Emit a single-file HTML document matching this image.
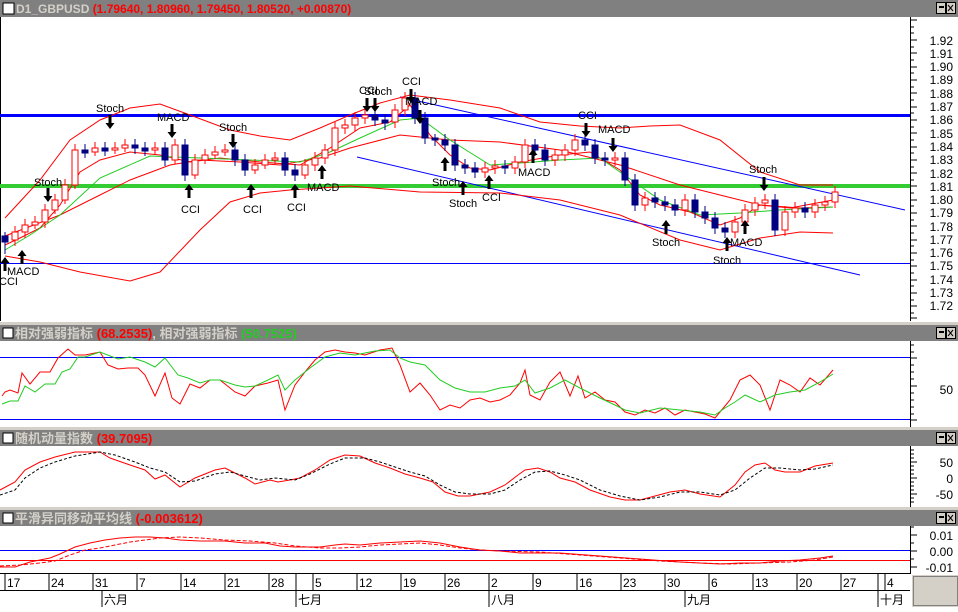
<!DOCTYPE html>
<html><head><meta charset="utf-8"><style>
body{margin:0;background:#fff;width:958px;height:607px;overflow:hidden;font-family:"Liberation Sans","Noto Sans CJK SC",sans-serif}
</style></head><body>
<svg width="958" height="607" xmlns="http://www.w3.org/2000/svg" font-family="Liberation Sans, Noto Sans CJK SC, sans-serif">
<rect width="958" height="607" fill="#fff"/>
<g>
<rect x="0" y="0" width="958" height="17" fill="#808080"/>
<rect x="3" y="3" width="11" height="11" fill="#fff" stroke="#000"/>
<text x="16" y="13" font-size="12" font-weight="bold" fill="#d4d0c8">D1_GBPUSD <tspan fill="#f00">(1.79640, 1.80960, 1.79450, 1.80520, +0.00870)</tspan></text>
<rect x="0" y="322" width="958" height="3" fill="#d4d0c8"/>
<rect x="0" y="325" width="958" height="16" fill="#808080"/>
<rect x="3" y="328" width="10" height="10" fill="#fff" stroke="#000"/>
<text x="15" y="338" font-size="13" font-weight="bold" fill="#d4d0c8">相对强弱指标 <tspan fill="#f00">(68.2535)</tspan>, 相对强弱指标 <tspan fill="#2c2">(50.7525)</tspan></text>
<rect x="0" y="427" width="958" height="3" fill="#d4d0c8"/>
<rect x="0" y="430" width="958" height="16" fill="#808080"/>
<rect x="3" y="433" width="10" height="10" fill="#fff" stroke="#000"/>
<text x="15" y="443" font-size="13" font-weight="bold" fill="#d4d0c8">随机动量指数 <tspan fill="#f00">(39.7095)</tspan></text>
<rect x="0" y="507" width="958" height="3" fill="#d4d0c8"/>
<rect x="0" y="510" width="958" height="16" fill="#808080"/>
<rect x="3" y="513" width="10" height="10" fill="#fff" stroke="#000"/>
<text x="15" y="523" font-size="13" font-weight="bold" fill="#d4d0c8">平滑异同移动平均线 <tspan fill="#f00">(-0.003612)</tspan></text>
<g fill="#d4d0c8" stroke="#000" stroke-width="1">
<rect x="936.5" y="2.5" width="9" height="11"/><rect x="946.5" y="2.5" width="9" height="11"/>
<rect x="936.5" y="327.5" width="9" height="11"/><rect x="946.5" y="327.5" width="9" height="11"/>
<rect x="936.5" y="432.5" width="9" height="11"/><rect x="946.5" y="432.5" width="9" height="11"/>
<rect x="936.5" y="512.5" width="9" height="11"/><rect x="946.5" y="512.5" width="9" height="11"/>
</g>
<g stroke="#000" stroke-width="2"><line x1="939" y1="7" x2="944" y2="7"/><line x1="939" y1="332" x2="944" y2="332"/><line x1="939" y1="437" x2="944" y2="437"/><line x1="939" y1="517" x2="944" y2="517"/></g>
<g stroke="#000" stroke-width="1"><path d="M948 5l5 6M953 5l-5 6M948 330l5 6M953 330l-5 6M948 435l5 6M953 435l-5 6M948 515l5 6M953 515l-5 6"/></g>
</g>
<g stroke="#000"><line x1="910.5" y1="17" x2="910.5" y2="321"/><line x1="910.5" y1="341" x2="910.5" y2="427"/><line x1="910.5" y1="446" x2="910.5" y2="507"/><line x1="910.5" y1="526" x2="910.5" y2="574"/><line x1="0" y1="573.5" x2="910" y2="573.5"/><line x1="0" y1="590.5" x2="910" y2="590.5"/><line x1="0.5" y1="17" x2="0.5" y2="321"/></g>
<g stroke="#000">
<path d="M910 20h7M910 27h4M910 33h4M910 40h7M910 47h4M910 53h7M910 60h4M910 67h7M910 73h4M910 80h7M910 87h4M910 93h7M910 100h4M910 107h7M910 113h4M910 120h7M910 127h4M910 133h7M910 140h4M910 147h7M910 153h4M910 160h7M910 167h4M910 173h7M910 180h4M910 186h7M910 193h4M910 200h7M910 206h4M910 213h7M910 220h4M910 226h7M910 233h4M910 240h7M910 246h4M910 253h7M910 260h4M910 266h7M910 273h4M910 280h7M910 286h4M910 293h7M910 300h4M910 306h7M910 313h4M910 318h7"/>
</g>
<g font-size="12" fill="#000" text-anchor="end">
<text x="953" y="45">1.92</text><text x="953" y="58">1.91</text><text x="953" y="71">1.90</text><text x="953" y="84">1.89</text><text x="953" y="98">1.88</text><text x="953" y="111">1.87</text><text x="953" y="124">1.86</text><text x="953" y="138">1.85</text><text x="953" y="151">1.84</text><text x="953" y="164">1.83</text><text x="953" y="178">1.82</text><text x="953" y="191">1.81</text><text x="953" y="204">1.80</text><text x="953" y="217">1.79</text><text x="953" y="231">1.78</text><text x="953" y="244">1.77</text><text x="953" y="257">1.76</text><text x="953" y="270">1.75</text><text x="953" y="284">1.74</text><text x="953" y="297">1.73</text><text x="953" y="310">1.72</text>
</g>
<rect x="0" y="114" width="910" height="3" fill="#00f"/>
<rect x="0" y="184" width="910" height="4" fill="#33cc33"/>
<line x1="0" y1="263.5" x2="910" y2="263.5" stroke="#00f"/>
<line x1="400" y1="97" x2="905" y2="210" stroke="#00f"/>
<line x1="357" y1="157" x2="860" y2="275" stroke="#00f"/>
<g fill="none" stroke="#f00">
<polyline points="5,218 40,180 70,140 100,120 130,108 160,104 190,115 230,130 260,136 290,140 320,128 350,115 380,103 410,95 450,100 500,108 540,122 580,126 620,128 650,126 680,125 720,140 760,172 800,185 833,185"/>
<polyline points="5,256 40,262 80,272 130,281 160,272 200,230 230,202 260,193 290,190 350,186 420,192 500,193 560,200 620,215 680,240 720,250 760,238 800,232 833,233"/>
<polyline points="5,236 60,215 100,195 130,180 170,165 200,160 240,162 280,165 320,158 350,148 400,135 450,140 500,142 560,150 620,165 680,185 720,195 760,205 800,208 833,207"/>
<polyline points="5,245 20,238 40,228 60,205 80,172 100,160 130,152 160,155 190,162 220,158 260,162 300,165 330,148 360,128 390,122 410,105 430,135 450,155 470,168 490,170 520,162 560,155 590,152 620,170 640,195 660,205 690,212 720,225 740,218 760,205 790,208 833,200"/>
</g>
<polyline fill="none" stroke="#2c2" points="5,250 30,235 60,215 100,178 150,156 200,158 250,160 300,162 330,152 360,138 400,120 420,118 450,140 490,165 520,163 560,160 600,158 620,172 660,200 700,215 740,213 780,210 833,207"/>
<g>
<g stroke="#f00" fill="#fff">
<line x1="15" y1="226" x2="15" y2="246"/><rect x="12" y="232" width="6" height="8"/>
<line x1="25" y1="219" x2="25" y2="238"/><rect x="22" y="225" width="6" height="7"/>
<line x1="35" y1="216" x2="35" y2="229"/><rect x="32" y="222" width="6" height="3"/>
<line x1="45" y1="204" x2="45" y2="228"/><rect x="42" y="210" width="6" height="12"/>
<line x1="55" y1="194" x2="55" y2="214"/><rect x="52" y="200" width="6" height="10"/>
<line x1="65" y1="179" x2="65" y2="204"/><rect x="62" y="185" width="6" height="15"/>
<line x1="75" y1="144" x2="75" y2="189"/><rect x="72" y="150" width="6" height="35"/>
<line x1="95" y1="142" x2="95" y2="156"/><rect x="92" y="148" width="6" height="4"/>
<line x1="115" y1="142" x2="115" y2="154"/><rect x="112" y="148" width="6" height="2"/>
<line x1="125" y1="139" x2="125" y2="152"/><rect x="122" y="145" width="6" height="3"/>
<line x1="155" y1="142" x2="155" y2="154"/><rect x="152" y="148" width="6" height="2"/>
<line x1="175" y1="139" x2="175" y2="164"/><rect x="172" y="145" width="6" height="15"/>
<line x1="195" y1="154" x2="195" y2="179"/><rect x="192" y="160" width="6" height="15"/>
<line x1="205" y1="149" x2="205" y2="164"/><rect x="202" y="155" width="6" height="5"/>
<line x1="215" y1="146" x2="215" y2="159"/><rect x="212" y="152" width="6" height="3"/>
<line x1="225" y1="144" x2="225" y2="156"/><rect x="222" y="150" width="6" height="2"/>
<line x1="255" y1="159" x2="255" y2="174"/><rect x="252" y="165" width="6" height="5"/>
<line x1="265" y1="154" x2="265" y2="169"/><rect x="262" y="160" width="6" height="5"/>
<line x1="275" y1="152" x2="275" y2="164"/><rect x="272" y="158" width="6" height="2"/>
<line x1="305" y1="159" x2="305" y2="179"/><rect x="302" y="165" width="6" height="10"/>
<line x1="315" y1="152" x2="315" y2="171"/><rect x="312" y="158" width="6" height="7"/>
<line x1="325" y1="144" x2="325" y2="164"/><rect x="322" y="150" width="6" height="8"/>
<line x1="335" y1="122" x2="335" y2="156"/><rect x="332" y="128" width="6" height="22"/>
<line x1="345" y1="119" x2="345" y2="134"/><rect x="342" y="125" width="6" height="3"/>
<line x1="355" y1="112" x2="355" y2="131"/><rect x="352" y="118" width="6" height="7"/>
<line x1="365" y1="109" x2="365" y2="124"/><rect x="362" y="115" width="6" height="3"/>
<line x1="395" y1="104" x2="395" y2="128"/><rect x="392" y="110" width="6" height="12"/>
<line x1="405" y1="92" x2="405" y2="116"/><rect x="402" y="98" width="6" height="12"/>
<line x1="485" y1="162" x2="485" y2="178"/><rect x="482" y="168" width="6" height="4"/>
<line x1="495" y1="160" x2="495" y2="174"/><rect x="492" y="166" width="6" height="2"/>
<line x1="515" y1="156" x2="515" y2="174"/><rect x="512" y="162" width="6" height="6"/>
<line x1="525" y1="139" x2="525" y2="168"/><rect x="522" y="145" width="6" height="17"/>
<line x1="555" y1="149" x2="555" y2="166"/><rect x="552" y="155" width="6" height="5"/>
<line x1="565" y1="144" x2="565" y2="161"/><rect x="562" y="150" width="6" height="5"/>
<line x1="575" y1="134" x2="575" y2="156"/><rect x="572" y="140" width="6" height="10"/>
<line x1="615" y1="152" x2="615" y2="166"/><rect x="612" y="158" width="6" height="2"/>
<line x1="645" y1="192" x2="645" y2="211"/><rect x="642" y="198" width="6" height="7"/>
<line x1="685" y1="194" x2="685" y2="216"/><rect x="682" y="200" width="6" height="10"/>
<line x1="735" y1="216" x2="735" y2="238"/><rect x="732" y="222" width="6" height="10"/>
<line x1="745" y1="204" x2="745" y2="228"/><rect x="742" y="210" width="6" height="12"/>
<line x1="755" y1="197" x2="755" y2="216"/><rect x="752" y="203" width="6" height="7"/>
<line x1="765" y1="194" x2="765" y2="209"/><rect x="762" y="200" width="6" height="3"/>
<line x1="785" y1="206" x2="785" y2="236"/><rect x="782" y="212" width="6" height="18"/>
<line x1="795" y1="202" x2="795" y2="218"/><rect x="792" y="208" width="6" height="4"/>
<line x1="815" y1="199" x2="815" y2="218"/><rect x="812" y="205" width="6" height="7"/>
<line x1="825" y1="196" x2="825" y2="211"/><rect x="822" y="202" width="6" height="3"/>
<line x1="835" y1="186" x2="835" y2="208"/><rect x="832" y="192" width="6" height="10"/>
</g>
<g stroke="#000080" fill="#000080">
<line x1="5" y1="232" x2="5" y2="254"/><rect x="2" y="236" width="6" height="6"/>
<line x1="85" y1="144" x2="85" y2="158"/><rect x="82" y="150" width="6" height="3"/>
<line x1="105" y1="142" x2="105" y2="156"/><rect x="102" y="148" width="6" height="3"/>
<line x1="135" y1="139" x2="135" y2="154"/><rect x="132" y="145" width="6" height="3"/>
<line x1="145" y1="142" x2="145" y2="156"/><rect x="142" y="148" width="6" height="3"/>
<line x1="165" y1="142" x2="165" y2="166"/><rect x="162" y="148" width="6" height="12"/>
<line x1="185" y1="139" x2="185" y2="181"/><rect x="182" y="145" width="6" height="30"/>
<line x1="235" y1="144" x2="235" y2="166"/><rect x="232" y="150" width="6" height="10"/>
<line x1="245" y1="154" x2="245" y2="176"/><rect x="242" y="160" width="6" height="10"/>
<line x1="285" y1="152" x2="285" y2="176"/><rect x="282" y="158" width="6" height="12"/>
<line x1="295" y1="164" x2="295" y2="181"/><rect x="292" y="170" width="6" height="5"/>
<line x1="375" y1="109" x2="375" y2="126"/><rect x="372" y="115" width="6" height="5"/>
<line x1="385" y1="114" x2="385" y2="130"/><rect x="382" y="120" width="6" height="3"/>
<line x1="415" y1="92" x2="415" y2="124"/><rect x="412" y="98" width="6" height="20"/>
<line x1="425" y1="112" x2="425" y2="144"/><rect x="422" y="118" width="6" height="20"/>
<line x1="435" y1="134" x2="435" y2="146"/><rect x="432" y="138" width="6" height="2"/>
<line x1="445" y1="134" x2="445" y2="151"/><rect x="442" y="140" width="6" height="5"/>
<line x1="455" y1="139" x2="455" y2="171"/><rect x="452" y="145" width="6" height="20"/>
<line x1="465" y1="159" x2="465" y2="174"/><rect x="462" y="165" width="6" height="3"/>
<line x1="475" y1="162" x2="475" y2="178"/><rect x="472" y="168" width="6" height="4"/>
<line x1="505" y1="160" x2="505" y2="174"/><rect x="502" y="166" width="6" height="2"/>
<line x1="535" y1="139" x2="535" y2="156"/><rect x="532" y="145" width="6" height="5"/>
<line x1="545" y1="144" x2="545" y2="166"/><rect x="542" y="150" width="6" height="10"/>
<line x1="585" y1="134" x2="585" y2="151"/><rect x="582" y="140" width="6" height="5"/>
<line x1="595" y1="139" x2="595" y2="164"/><rect x="592" y="145" width="6" height="13"/>
<line x1="605" y1="152" x2="605" y2="166"/><rect x="602" y="158" width="6" height="2"/>
<line x1="625" y1="152" x2="625" y2="186"/><rect x="622" y="158" width="6" height="22"/>
<line x1="635" y1="174" x2="635" y2="211"/><rect x="632" y="180" width="6" height="25"/>
<line x1="655" y1="192" x2="655" y2="208"/><rect x="652" y="198" width="6" height="4"/>
<line x1="665" y1="196" x2="665" y2="211"/><rect x="662" y="202" width="6" height="3"/>
<line x1="675" y1="199" x2="675" y2="216"/><rect x="672" y="205" width="6" height="5"/>
<line x1="695" y1="194" x2="695" y2="218"/><rect x="692" y="200" width="6" height="12"/>
<line x1="705" y1="206" x2="705" y2="224"/><rect x="702" y="212" width="6" height="6"/>
<line x1="715" y1="212" x2="715" y2="234"/><rect x="712" y="218" width="6" height="10"/>
<line x1="725" y1="222" x2="725" y2="238"/><rect x="722" y="228" width="6" height="4"/>
<line x1="775" y1="194" x2="775" y2="236"/><rect x="772" y="200" width="6" height="30"/>
<line x1="805" y1="202" x2="805" y2="218"/><rect x="802" y="208" width="6" height="4"/>
</g>
</g>
<g fill="#000" stroke="none">
<path d="M-1.5 0h3v8h3l-4.5 6l-4.5-6h3z" transform="translate(110,115)"/>
<path d="M-1.5 0h3v8h3l-4.5 6l-4.5-6h3z" transform="translate(172,124)"/>
<path d="M-1.5 0h3v8h3l-4.5 6l-4.5-6h3z" transform="translate(233,134)"/>
<path d="M-1.5 0h3v8h3l-4.5 6l-4.5-6h3z" transform="translate(48,188)"/>
<path d="M-1.5 0h3v8h3l-4.5 6l-4.5-6h3z" transform="translate(367,98)"/>
<path d="M-1.5 0h3v8h3l-4.5 6l-4.5-6h3z" transform="translate(375,98)"/>
<path d="M-1.5 0h3v8h3l-4.5 6l-4.5-6h3z" transform="translate(411,89)"/>
<path d="M-1.5 0h3v8h3l-4.5 6l-4.5-6h3z" transform="translate(420,110)"/>
<path d="M-1.5 0h3v8h3l-4.5 6l-4.5-6h3z" transform="translate(586,123)"/>
<path d="M-1.5 0h3v8h3l-4.5 6l-4.5-6h3z" transform="translate(613,138)"/>
<path d="M-1.5 0h3v8h3l-4.5 6l-4.5-6h3z" transform="translate(764,177)"/>
<path d="M-1.5 14h3v-8h3l-4.5-6l-4.5 6h3z" transform="translate(5,257)"/>
<path d="M-1.5 14h3v-8h3l-4.5-6l-4.5 6h3z" transform="translate(22,250)"/>
<path d="M-1.5 14h3v-8h3l-4.5-6l-4.5 6h3z" transform="translate(189,184)"/>
<path d="M-1.5 14h3v-8h3l-4.5-6l-4.5 6h3z" transform="translate(251,184)"/>
<path d="M-1.5 14h3v-8h3l-4.5-6l-4.5 6h3z" transform="translate(295,184)"/>
<path d="M-1.5 14h3v-8h3l-4.5-6l-4.5 6h3z" transform="translate(322,165)"/>
<path d="M-1.5 14h3v-8h3l-4.5-6l-4.5 6h3z" transform="translate(445,157)"/>
<path d="M-1.5 14h3v-8h3l-4.5-6l-4.5 6h3z" transform="translate(463,181)"/>
<path d="M-1.5 14h3v-8h3l-4.5-6l-4.5 6h3z" transform="translate(489,175)"/>
<path d="M-1.5 14h3v-8h3l-4.5-6l-4.5 6h3z" transform="translate(533,149)"/>
<path d="M-1.5 14h3v-8h3l-4.5-6l-4.5 6h3z" transform="translate(666,220)"/>
<path d="M-1.5 14h3v-8h3l-4.5-6l-4.5 6h3z" transform="translate(745,220)"/>
<path d="M-1.5 14h3v-8h3l-4.5-6l-4.5 6h3z" transform="translate(727,237)"/>
</g>
<g font-size="11" fill="#000">
<text x="96" y="112">Stoch</text><text x="157" y="121">MACD</text><text x="219" y="131">Stoch</text><text x="34" y="186">Stoch</text>
<text x="181" y="213">CCI</text><text x="243" y="213">CCI</text><text x="287" y="211">CCI</text><text x="307" y="191">MACD</text>
<text x="7" y="275">MACD</text><text x="-1" y="285">CCI</text>
<text x="359" y="94">CCI</text><text x="364" y="95">Stoch</text><text x="402" y="85">CCI</text><text x="405" y="105">MACD</text>
<text x="432" y="186">Stoch</text><text x="449" y="207">Stoch</text><text x="482" y="201">CCI</text><text x="518" y="176">MACD</text>
<text x="578" y="119">CCI</text><text x="598" y="133">MACD</text><text x="652" y="246">Stoch</text><text x="730" y="246">MACD</text>
<text x="713" y="264">Stoch</text><text x="749" y="173">Stoch</text>
</g>
<line x1="0" y1="357.5" x2="910" y2="357.5" stroke="#00f"/>
<line x1="0" y1="419.5" x2="910" y2="419.5" stroke="#00f"/>
<g stroke="#000"><path d="M910 345h4M910 352h4M910 358h7M910 365h4M910 372h4M910 379h4M910 386h7M910 393h4M910 400h4M910 407h4M910 414h4M910 420h7"/></g>
<text x="953" y="394" font-size="12" text-anchor="end">50</text>
<polyline fill="none" stroke="#f00" points="2,396 5,392 10,390 18,393 22,373 30,384 40,372 50,372 58,358 68,349 75,355 85,355 100,352 108,365 118,369 128,368 138,368 145,375 155,396 165,373 172,398 180,404 190,384 200,388 210,380 220,380 235,392 245,396 255,386 268,383 278,380 285,410 295,385 305,372 315,360 325,352 335,350 345,352 355,353 365,355 380,350 392,348 400,365 410,392 420,383 430,395 440,410 450,405 460,408 470,400 480,398 490,402 500,400 510,395 520,383 525,370 530,395 540,400 550,382 560,372 570,396 578,376 585,398 595,392 605,400 615,402 625,412 635,415 645,410 655,413 665,408 675,415 685,410 695,412 705,414 715,418 720,412 730,400 740,380 750,375 760,385 770,410 780,380 790,385 800,392 810,378 820,385 833,370"/>
<polyline fill="none" stroke="#2c2" points="2,404 10,401 18,401 25,386 35,392 45,384 55,384 62,372 70,369 78,357 85,357 100,352 118,359 130,357 145,362 155,367 165,358 178,375 188,378 200,383 210,380 220,380 235,385 245,387 255,386 268,380 278,375 285,390 295,380 310,368 325,357 340,353 355,355 375,351 390,350 400,358 410,362 425,365 440,380 455,388 470,392 485,392 500,388 515,386 525,380 535,393 550,388 565,380 580,388 600,398 615,405 625,410 640,413 660,408 680,410 700,412 715,415 725,408 735,402 745,395 760,402 775,395 790,392 805,390 820,382 833,374"/>
<g stroke="#000"><path d="M910 450h4M910 454h4M910 458h4M910 462h7M910 466h4M910 470h4M910 474h4M910 478h7M910 482h4M910 486h4M910 490h4M910 494h7M910 498h4M910 502h4"/></g>
<g font-size="12" text-anchor="end"><text x="953" y="467">50</text><text x="953" y="483">0</text><text x="953" y="499">-50</text></g>
<polyline fill="none" stroke="#f00" points="0,490 15,482 25,470 40,462 55,457 75,452 100,452 110,458 130,465 145,470 155,479 165,475 180,487 195,478 215,470 225,468 245,478 255,484 270,480 278,482 290,480 300,478 315,470 330,460 345,455 360,456 375,463 390,468 405,474 420,478 433,482 445,492 458,496 470,496 490,492 505,485 518,475 525,470 538,468 550,472 560,478 575,482 590,490 610,497 625,500 640,500 655,496 670,492 685,490 700,494 720,497 735,485 745,472 755,465 765,463 775,470 785,472 800,472 815,466 833,463"/>
<polyline fill="none" stroke="#000" stroke-dasharray="3,2" points="0,495 15,490 25,478 40,468 55,462 75,456 100,452 115,455 135,462 150,468 165,472 180,482 195,481 215,474 230,472 245,476 260,480 275,478 295,480 310,474 330,464 345,458 365,458 380,462 395,467 410,472 425,476 440,485 455,492 470,494 490,494 505,490 520,480 535,472 550,471 565,475 580,480 600,490 620,496 640,500 660,497 680,492 700,492 720,495 735,490 750,478 765,468 780,468 800,470 815,469 833,465"/>
<line x1="0" y1="550.5" x2="910" y2="550.5" stroke="#00f"/>
<line x1="0" y1="560.5" x2="910" y2="560.5" stroke="#f00"/>
<g stroke="#000"><path d="M910 527h4M910 535h7M910 543h4M910 551h7M910 559h4M910 567h7"/></g>
<g font-size="12" text-anchor="end"><text x="953" y="540">0.01</text><text x="953" y="556">0.00</text><text x="953" y="572">-0.01</text></g>
<polyline fill="none" stroke="#f00" points="0,567 15,567 30,562 50,558 60,554 75,547 90,543 105,540 120,538 135,537 150,537 165,538 180,540 200,541 225,541 245,543 265,543 280,546 295,547 320,547 335,545 345,544 360,545 380,543 400,542 420,541 440,543 460,547 480,550 500,551 520,553 560,553 600,556 640,559 680,562 700,563 720,564 740,563 760,563 780,561 800,560 820,558 833,556"/>
<polyline fill="none" stroke="#f00" stroke-dasharray="4,2" points="0,566 20,565 40,563 55,561 70,555 85,550 100,548 115,545 130,542 145,540 160,538 180,537 200,538 225,540 250,541 275,543 295,546 320,548 340,548 360,547 380,545 400,544 420,543 440,545 460,548 480,550 500,551 540,552 580,555 620,558 660,561 700,563 730,564 760,563 790,562 815,560 833,557"/>
<g stroke="#000"><path d="M5 574v16M49 574v16M93 574v16M137 574v16M181 574v16M225 574v16M269 574v16M296 574v16M313 574v16M357 574v16M401 574v16M445 574v16M489 574v16M533 574v16M577 574v16M621 574v16M665 574v16M709 574v16M753 574v16M797 574v16M841 574v16M878 574v16M885 574v16M102 590v17M296 590v17M489 590v17M685 590v17M878 590v17"/></g>
<g font-size="12"><text x="7" y="587">17</text><text x="51" y="587">24</text><text x="95" y="587">31</text><text x="139" y="587">7</text><text x="183" y="587">14</text><text x="227" y="587">21</text><text x="271" y="587">28</text><text x="315" y="587">5</text><text x="359" y="587">12</text><text x="403" y="587">19</text><text x="447" y="587">26</text><text x="491" y="587">2</text><text x="535" y="587">9</text><text x="579" y="587">16</text><text x="623" y="587">23</text><text x="667" y="587">30</text><text x="711" y="587">6</text><text x="755" y="587">13</text><text x="799" y="587">20</text><text x="843" y="587">27</text><text x="887" y="587">4</text>
<text x="104" y="604">六月</text><text x="298" y="604">七月</text><text x="491" y="604">八月</text><text x="687" y="604">九月</text><text x="880" y="604">十月</text></g>
<rect x="912" y="575" width="46" height="32" fill="#d4d0c8"/>
<rect x="913.5" y="576.5" width="44" height="29" fill="none" stroke="#808080"/>
</svg>
</body></html>
